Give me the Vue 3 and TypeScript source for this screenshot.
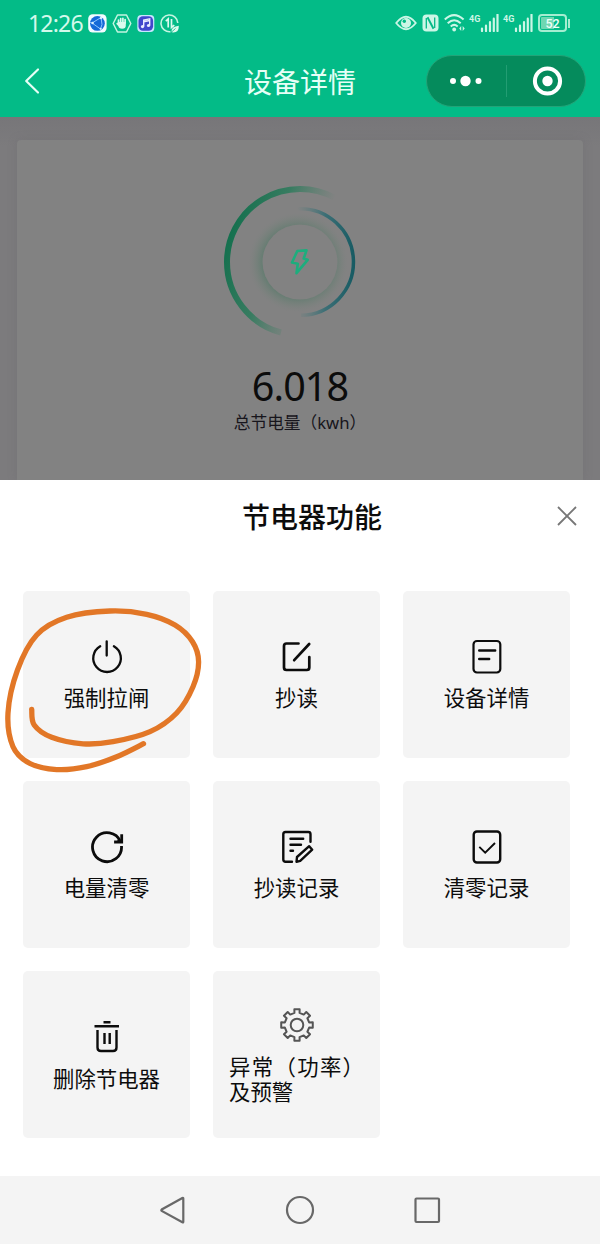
<script setup lang="ts">
type IconName = 'power' | 'edit' | 'detail' | 'reset' | 'log' | 'check' | 'trash' | 'gear'

interface Action {
  icon: IconName
  label: string
}

const actions: Action[] = [
  { icon: 'power', label: '强制拉闸' },
  { icon: 'edit', label: '抄读' },
  { icon: 'detail', label: '设备详情' },
  { icon: 'reset', label: '电量清零' },
  { icon: 'log', label: '抄读记录' },
  { icon: 'check', label: '清零记录' },
  { icon: 'trash', label: '删除节电器' },
  { icon: 'gear', label: '异常（功率）及预警' },
]

type Point = [number, number]

// Freehand marker stroke drawn around the first action
const marker: Point[] = [
  [31.7, 709.3], [34.2, 725], [51.7, 737.3], [83, 743.8], [113, 741.7], [150, 731.7],
  [176.7, 713], [193, 686.7], [198.6, 661.7], [192.5, 641.7], [175, 625], [146.7, 614.3],
  [110, 611], [66.7, 617.3], [36.7, 635], [17.5, 670], [8, 713], [13, 746.7],
  [30, 763.5], [56.7, 769.6], [86.7, 766.7], [116.7, 756.7], [143.5, 743.7],
]

function smooth(points: Point[]): string {
  let d = `M${points[0][0]} ${points[0][1]}`
  for (let i = 0; i < points.length - 1; i++) {
    const a = points[Math.max(i - 1, 0)]
    const b = points[i]
    const c = points[i + 1]
    const e = points[Math.min(i + 2, points.length - 1)]
    d += `C${b[0] + (c[0] - a[0]) / 6} ${b[1] + (c[1] - a[1]) / 6} ${c[0] - (e[0] - b[0]) / 6} ${c[1] - (e[1] - b[1]) / 6} ${c[0]} ${c[1]}`
  }
  return d
}

function gearPath(): string {
  const points: string[] = []
  for (let i = 0; i < 8; i++) {
    const base = i * 45 - 90
    const corners: Point[] = [[-12, 12.4], [-9.5, 16], [9.5, 16], [12, 12.4]]
    for (const [offset, radius] of corners) {
      const angle = ((base + offset) * Math.PI) / 180
      points.push(`${(18 + radius * Math.cos(angle)).toFixed(2)} ${(18 + radius * Math.sin(angle)).toFixed(2)}`)
    }
  }
  return `M${points.join('L')}Z`
}

const markerPath = smooth(marker)
const gear = gearPath()
</script>

<template>
  <div class="phone">
    <header class="top">
      <div class="status">
        <span class="clock">12:26</span>
        <div class="notes">
          <svg width="19" height="19" viewBox="0 0 19 19">
            <rect x="0.2" y="0.2" width="18.4" height="18.4" rx="4.5" fill="#f2fbff" />
            <circle cx="9.4" cy="9.4" r="7.4" fill="#1469d8" />
            <path d="M13 3.5L4 9l8.5 6M13 3.5l1 7-1.500 4.500M4 9l-2-.5" fill="none" stroke="#8fc6ff" stroke-width="1" />
            <circle cx="4.600" cy="9" r="1.300" fill="#d6efff" />
            <circle cx="13" cy="4" r="1.200" fill="#d6efff" />
            <circle cx="12.700" cy="14.800" r="1.100" fill="#d6efff" />
          </svg>
          <svg width="20" height="19" viewBox="0 0 20 19">
            <path d="M5.500 1h9l4.300 8.500-4.300 8.500h-9L1.200 9.500z" fill="none" stroke="#c4f5e1" stroke-width="1.500" stroke-linejoin="round" />
            <path d="M6.500 9.500V6M8.700 8V4.500M10.900 8V4.300M13.100 9V5.500M5.200 9.700l2 2" stroke="#dcfaee" stroke-width="1.700" stroke-linecap="round" />
            <path d="M5.800 8h8v3.500q0 3.200-3.600 3.200T6.500 12z" fill="#dcfaee" />
          </svg>
          <svg width="18" height="19" viewBox="0 0 18 19">
            <rect x="0.300" y="1" width="17" height="17" rx="4" fill="#c9e6ff" />
            <rect x="1.500" y="2.200" width="14.600" height="14.600" rx="4.500" fill="#4147cc" />
            <path d="M6.700 12.500V6l6-1.200v6.600M6.700 7.700l6-1.200" fill="none" stroke="#e9ecff" stroke-width="1.400" />
            <circle cx="5.500" cy="12.600" r="1.600" fill="#e9ecff" />
            <circle cx="11.500" cy="11.500" r="1.600" fill="#e9ecff" />
          </svg>
          <svg width="20" height="19" viewBox="0 0 20 19">
            <path d="M10.500 17.700A8.400 8.400 0 1 1 17.800 9" fill="none" stroke="#c4f5e1" stroke-width="1.600" />
            <path d="M5.800 7.200L8.200 5v8.500M11.500 5v8.500l2.800-2.300" fill="none" stroke="#dcfaee" stroke-width="1.700" />
            <path d="M11.500 18.300q-.6-5.800 7.300-6.600.3 7.800-7.300 6.600z" fill="#dcfaee" />
            <path d="M11 18.500l4.500-4" stroke="#03b986" stroke-width="0.800" />
          </svg>
        </div>
        <div class="signals">
          <svg width="22" height="18" viewBox="0 0 22 18">
            <path d="M1.200 9Q11-3.500 20.800 9 11 21.500 1.200 9z" fill="none" stroke="#ccf6e6" stroke-width="1.800" />
            <circle cx="11" cy="9" r="5" fill="#ccf6e6" />
            <circle cx="9.300" cy="7.300" r="1.700" fill="#03b986" />
          </svg>
          <svg class="nfc" width="17" height="18" viewBox="0 0 17 18">
            <rect x="0.500" y="0.500" width="16" height="17" rx="4" fill="#ccf6e6" />
            <path d="M4.300 14.500V4M12.700 14V3.500" stroke="#03b986" stroke-width="1.300" />
            <path d="M5.500 3.200l6 11.500" stroke="#03b986" stroke-width="1.900" />
          </svg>
          <svg class="wifi" width="22" height="18" viewBox="0 0 22 18">
            <g fill="none" stroke="#ccf6e6" stroke-width="2">
              <path d="M0.800 5.500q9.200-8.800 18.800 0M3.700 9.200q6.500-6 13 0M6.700 12.400q3.500-3 7 0" />
            </g>
            <circle cx="10.200" cy="15.500" r="1.900" fill="#ccf6e6" />
            <path d="M17.200 12v5l-2-2.500zM18.700 12v5l2-2.500z" fill="#ccf6e6" />
          </svg>
          <div v-for="n in 2" :key="n" class="cell">
            <span>4G</span>
            <svg width="19" height="18" viewBox="0 0 19 18">
              <path d="M2 14.500V17M6 11.700V17M10 8.200V17M13.800 4.700V17M17.500 .7V17" stroke="#ccf6e6" stroke-width="2.200" stroke-linecap="round" />
            </svg>
          </div>
          <div class="battery"><span>52</span></div>
          <i class="battery-tip"></i>
        </div>
      </div>
      <div class="nav">
        <svg class="back" width="18" height="28" viewBox="0 0 18 28">
          <path d="M15 2.500L3.200 14 15 25.500" fill="none" stroke="#e6fff6" stroke-width="2.200" stroke-linecap="round" stroke-linejoin="round" />
        </svg>
        <h1>设备详情</h1>
        <div class="capsule">
          <svg width="79" height="50" viewBox="0 0 79 50" fill="#fff">
            <circle cx="26" cy="25" r="3" /><circle cx="38.500" cy="25" r="5.200" /><circle cx="51.500" cy="25" r="3" />
          </svg>
          <i></i>
          <svg width="78" height="50" viewBox="0 0 78 50">
            <circle cx="40.500" cy="25" r="12.600" fill="none" stroke="#fff" stroke-width="4" />
            <circle cx="40.500" cy="25" r="5.200" fill="#fff" />
          </svg>
        </div>
      </div>
    </header>

    <main class="device">
      <section class="summary">
        <svg class="gauge" width="160" height="160" viewBox="220 182 160 160">
          <defs>
            <linearGradient id="outer" gradientUnits="userSpaceOnUse" x1="227" y1="240" x2="314" y2="267">
              <stop offset="0" stop-color="#14704e" />
              <stop offset="0.500" stop-color="#2b7b5b" stop-opacity="0.850" />
              <stop offset="1" stop-color="#4b8069" stop-opacity="0" />
            </linearGradient>
            <linearGradient id="inner" gradientUnits="userSpaceOnUse" x1="354" y1="262" x2="297" y2="262">
              <stop offset="0" stop-color="#175b63" />
              <stop offset="0.500" stop-color="#2e6b73" stop-opacity="0.850" />
              <stop offset="1" stop-color="#4b7a7a" stop-opacity="0" />
            </linearGradient>
            <radialGradient id="halo" gradientUnits="userSpaceOnUse" cx="298" cy="262.500" r="50">
              <stop offset="0.720" stop-color="#567a69" stop-opacity="0.600" />
              <stop offset="0.860" stop-color="#6a7f74" stop-opacity="0.350" />
              <stop offset="1" stop-color="#7c827f" stop-opacity="0" />
            </radialGradient>
          </defs>
          <circle cx="298" cy="262.500" r="50" fill="url(#halo)" />
          <circle cx="300" cy="262" r="37.500" fill="#828282" />
          <path d="M334 197.400A73 73 0 0 0 227 262A73 73 0 0 0 281 332.500" fill="none" stroke="url(#outer)" stroke-width="6" />
          <path d="M297 208.800A53.300 53.300 0 1 1 301 315.300" fill="none" stroke="url(#inner)" stroke-width="3.500" />
          <path d="M297.300 251l9.200-.6-2.800 8.100 4 1.300-11.200 13.400 1.300-9.500-5.800-1.200z" fill="none" stroke="#1dad7d" stroke-width="2.600" stroke-linejoin="round" />
        </svg>
        <strong>6.018</strong>
        <p>总节电量（kwh）</p>
      </section>
    </main>

    <section class="sheet">
      <div class="sheet-head">
        <h2>节电器功能</h2>
        <svg width="22" height="22" viewBox="0 0 22 22">
          <path d="M2 2l18 18M20 2L2 20" stroke="#777" stroke-width="1.800" />
        </svg>
      </div>
      <div class="grid">
        <button v-for="item in actions" :key="item.icon" class="tile">
          <svg width="36" height="36" viewBox="0 0 36 36" fill="none" stroke="#0c0c0c" stroke-width="2.200">
            <g v-if="item.icon === 'power'" stroke-linecap="round">
              <path d="M17.700 2.300v14.200M11.200 7.200a13.800 13.800 0 1 0 13.700 0" stroke-width="2.300" />
            </g>
            <g v-else-if="item.icon === 'edit'" stroke-width="2.700" stroke-linecap="round" stroke-linejoin="round">
              <path d="M19.500 4.500H7.500Q5 4.500 5 7v21.500Q5 31 7.500 31h20.300q2.500 0 2.500-2.500V18M15.200 21.200L30.200 5" />
            </g>
            <g v-else-if="item.icon === 'detail'" stroke-linecap="round">
              <rect x="4.500" y="2" width="26.800" height="31.500" rx="3.500" />
              <path d="M10.200 11.500h16M10.200 20h10" stroke-width="2.400" />
            </g>
            <g v-else-if="item.icon === 'reset'" stroke-width="2.800">
              <path d="M32.500 17A14.500 14.500 0 1 1 31.400 12.500" />
              <path d="M32.700 5.200v7.800h-7.600" />
              <path d="M29.500 8.500l3 4.500-4.500-.5z" fill="#0c0c0c" stroke="none" />
            </g>
            <g v-else-if="item.icon === 'log'" stroke-width="2.400" stroke-linejoin="round" stroke-linecap="round">
              <path d="M13 32.700H6.500q-2.200 0-2.200-2.200V5.300Q4.300 3 6.500 3h22.800q2.200 0 2.200 2.200v7.600" />
              <path d="M11.500 9.700h12.700M11.500 15.700H22M11.500 21.700h2.500" />
              <path d="M18 28L30.200 17.200l3 3.500-12 11.100-3.700 1z" />
            </g>
            <g v-else-if="item.icon === 'check'">
              <rect x="4.700" y="2.500" width="26.500" height="31" rx="3.200" stroke-width="2.400" />
              <path d="M10.300 17.900l5.900 5.700 9.800-9.600" stroke-width="1.900" />
            </g>
            <g v-else-if="item.icon === 'trash'" stroke-width="2.400">
              <path d="M14.500 3.200h7M5.500 7.200h24.500M8.500 11v17.500q0 3.500 3.500 3.500h12q3.500 0 3.500-3.500V11M15.500 14v11M20.700 14v11" />
            </g>
            <g v-else stroke="#555" stroke-width="2" stroke-linejoin="round">
              <path :d="gear" />
              <circle cx="18" cy="18" r="6.300" />
            </g>
          </svg>
          <span class="label">{{ item.label }}</span>
        </button>
      </div>
    </section>

    <footer class="keys">
      <svg width="28" height="30" viewBox="0 0 28 30">
        <path d="M25.300 3.500v23.300q0 1-.9.500L3.700 15.900q-.8-.7 0-1.400L24.400 3q.9-.5.900.5z" />
      </svg>
      <svg width="30" height="30" viewBox="0 0 30 30"><circle cx="15" cy="15" r="13" /></svg>
      <svg width="28" height="30" viewBox="0 0 28 30"><rect x="1.500" y="3.500" width="23.500" height="23.500" rx="1" /></svg>
    </footer>

    <svg class="marker" width="210" height="200" viewBox="0 580 210 200">
      <path :d="markerPath" fill="none" stroke="#e27727" stroke-width="5.300" stroke-linecap="round" stroke-linejoin="round" />
    </svg>
  </div>
</template>

<style>
body {
  margin: 0;
}
</style>

<style scoped>
.phone {
  position: relative;
  display: flex;
  flex-direction: column;
  width: 600px;
  height: 1244px;
  overflow: hidden;
  background: #fff;
  color: #0c0c0c;
  font-family: "Noto Sans", "Noto Sans CJK SC", sans-serif;
}

svg {
  display: block;
  flex: none;
}

.top {
  height: 117px;
  flex: none;
  background: #03bb87;
  color: #e6fff6;
}

.status {
  display: flex;
  align-items: center;
  height: 46px;
  padding: 0 30px 0 28px;
}

.clock {
  width: 60px;
  font-size: 23px;
  line-height: 30px;
  letter-spacing: -0.8px;
  color: #d4f9eb;
}

.notes {
  display: flex;
  gap: 5px;
}

.signals {
  display: flex;
  align-items: center;
  margin-left: auto;
}

.nfc {
  margin-left: 5px;
}

.wifi {
  margin: 0 3px 0 5px;
}

.cell {
  display: flex;
  width: 30px;
  margin-right: 4px;
  color: #ccf6e6;
  font: bold 9px/10px "Roboto", sans-serif;
}

.cell:nth-last-child(3) {
  margin-right: 5px;
}

.cell span {
  width: 11px;
}

.battery {
  box-sizing: border-box;
  width: 29px;
  height: 18px;
  border: 2px solid #a5edd1;
  border-radius: 4px;
  background: linear-gradient(90deg, #6fd7b2 55%, #03b986 55%) content-box;
  padding: 1px;
  text-align: center;
  color: #f0fff9;
  font: 500 12.500px/13px "Roboto", sans-serif;
}

.battery-tip {
  width: 2px;
  height: 9px;
  margin-left: 1px;
  background: #a5edd1;
}

.nav {
  display: grid;
  grid-template-columns: 160px 1fr 160px;
  align-items: center;
  height: 69px;
  padding: 0 14px;
}

.back {
  margin-left: 9px;
}

h1 {
  margin: 2px 0 0;
  text-align: center;
  font-size: 28px;
  font-weight: 400;
  line-height: 40px;
}

.capsule {
  box-sizing: border-box;
  display: flex;
  align-items: center;
  width: 160px;
  height: 52px;
  border: 1px solid #23a378;
  border-radius: 26px;
  background: #058b5c;
}

.capsule i {
  width: 1px;
  height: 32px;
  background: #239d73;
}

.device {
  box-sizing: border-box;
  height: 363px;
  flex: none;
  padding: 23px 17px 0;
  background: linear-gradient(#777679, #7c7b7d 30px);
}

.summary {
  display: flex;
  flex-direction: column;
  align-items: center;
  height: 340px;
  border-radius: 4px 4px 0 0;
  background: #828282;
  box-shadow: 0 0 8px rgba(105, 103, 108, 0.350);
}

.gauge {
  margin-top: 42px;
}

.summary strong {
  margin-top: 19px;
  font-size: 39.500px;
  font-weight: 400;
  line-height: 50px;
  letter-spacing: -0.900px;
}

.summary p {
  margin: 0;
  font-size: 16.700px;
  line-height: 24px;
  color: #17151c;
}

.sheet {
  height: 696px;
  flex: none;
  background: #fff;
}

.sheet-head {
  display: grid;
  grid-template-columns: 1fr 22px;
  align-items: center;
  height: 72px;
  padding: 0 22px 0 68px;
}

h2 {
  margin: 2px 0 0;
  text-align: center;
  font-size: 28px;
  font-weight: 500;
  line-height: 40px;
}

.grid {
  display: grid;
  grid-template-columns: repeat(3, 167px);
  grid-auto-rows: 167px;
  gap: 23px;
  padding: 39px 23px 0;
}

.tile {
  display: flex;
  flex-direction: column;
  align-items: center;
  justify-content: center;
  gap: 10px;
  padding: 0 16px;
  border: 0;
  border-radius: 5px;
  background: #f4f4f4;
  color: inherit;
  font: inherit;
}

.tile:nth-child(n + 7) {
  gap: 11px;
  padding-top: 2px;
}

.label {
  text-align: justify;
  font-size: 21.400px;
  line-height: 25.500px;
}

.keys {
  display: flex;
  align-items: center;
  justify-content: center;
  gap: 99px;
  height: 68px;
  background: #f4f4f4;
}

.keys svg {
  fill: none;
  stroke: #686868;
  stroke-width: 2.200px;
}

.marker {
  position: absolute;
  top: 580px;
  left: 0;
}
</style>
